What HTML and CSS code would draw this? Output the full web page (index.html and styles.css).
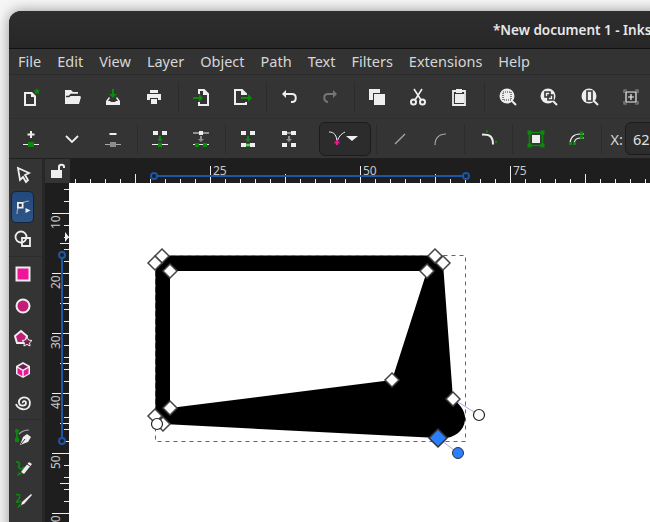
FILE: index.html
```html
<!DOCTYPE html>
<html>
<head>
    <meta charset="UTF-8">
    <title>New document 1 - Inkscape</title>
    <link rel="stylesheet" href="styles.css">
</head>
<body>
<div class="window">
    <div class="titlebar"><span class="title">*New document 1 - Inkscape</span></div>

    <ul class="menubar">
        <li>File</li><li>Edit</li><li>View</li><li>Layer</li><li>Object</li><li>Path</li><li>Text</li><li>Filters</li><li>Extensions</li><li>Help</li>
    </ul>

    <!-- commands -->
    <div class="toolbar first">
        <span class="btn"><svg viewBox="0 0 20 20"><path class="w2" d="M4 6h6l4 4v8H4z"/><path class="wf" d="M10 5h1l4 4v1h-5z"/><path class="gf" d="M16 1l1 2.300 2.400.2-1.800 1.500.6 2.400-2.200-1.300-2.200 1.300.6-2.400-1.800-1.500 2.400-.2z"/></svg></span>
        <span class="btn"><svg viewBox="0 0 20 20"><path class="wf" d="M3 3h6l2 2h5v2H9L7 9h11l1 1-2 7H3z"/><path class="d1" d="M4 9.500h3l2-2h8"/></svg></span>
        <span class="btn"><svg viewBox="0 0 20 20"><path class="gf" d="M9 2h2v5h3l-4 4-4-4h3z"/><path class="wf" d="M6 10l-3 4v4h14v-4l-3-4-1 1 2 3h-2l-1 1H8l-1-1H5l2-3z"/></svg></span>
        <span class="btn"><svg viewBox="0 0 20 20"><path class="wf ink" d="M6 3h8v3H6zM3 7h14v6h-3v-2H6v2H3zM7 12h6v5H7z"/></svg></span>
        <i class="sep"></i>
        <span class="btn"><svg viewBox="0 0 20 20"><path class="w2" d="M8 7V3h5l4 4v11H8v-3"/><path class="wf" d="M12 3h1l4 4v1h-5z"/><path class="gf" d="M2 10h6V7l4 4-4 4v-3H2z"/></svg></span>
        <span class="btn"><svg viewBox="0 0 20 20"><path class="w2" d="M14 8V7l-4-4H3v14h11v-2"/><path class="wf" d="M9 3h1l4 4v1H9z"/><path class="gf" d="M9 10h7V7l4 4-4 4v-3H9z"/></svg></span>
        <i class="sep"></i>
        <span class="btn"><svg viewBox="0 0 20 20"><path class="w2" d="M6 7h7c5 0 5 8 0 8h-1"/><path class="wf" d="M7 3v8L3 7z"/></svg></span>
        <span class="btn dim"><svg viewBox="0 0 20 20"><path class="w2" d="M14 7H8c-5 0-5 7 0 8"/><path class="wf" d="M13 3v8l4-4z"/></svg></span>
        <i class="sep"></i>
        <span class="btn"><svg viewBox="0 0 20 20"><path class="wf" d="M2 2h11v4H6v7H2z"/><path class="wf" d="M7 7h11v11H7z"/></svg></span>
        <span class="btn"><svg viewBox="0 0 20 20"><path class="w2 thin" d="M6 2l7 11M14 2L7 13"/><circle class="w2" cx="5.500" cy="15" r="2.500"/><circle class="w2" cx="14.500" cy="15" r="2.500"/></svg></span>
        <span class="btn"><svg viewBox="0 0 20 20"><path class="w2 mid" d="M7 4H4v14h12V4h-3"/><path class="wf" d="M7 2h6v4H7zM6 7h9v9H6z"/></svg></span>
        <i class="sep wide"></i>
        <span class="btn"><svg viewBox="0 0 20 20"><circle class="wf" cx="9" cy="9" r="7.500"/><path class="w2" d="M14 14l4 4"/><path class="dots" d="M5 5h8v8H5z"/></svg></span>
        <span class="btn"><svg viewBox="0 0 20 20"><circle class="wf" cx="9" cy="9" r="7.500"/><path class="w2" d="M14 14l4 4"/><path class="ds" d="M6 5h5v5H6z"/><path class="ds" d="M9 8h5v5H9z"/></svg></span>
        <span class="btn"><svg viewBox="0 0 20 20"><circle class="wf" cx="9" cy="9" r="7.500"/><path class="w2" d="M14 14l4 4"/><path class="ds" d="M7 4h5v10H7z"/></svg></span>
        <span class="btn"><svg viewBox="0 0 20 20"><path class="frame" d="M3 6V3h3M14 3h3v3M17 14v3h-3M6 17H3v-3"/><path class="w1" d="M5 5h10v10H5zM7 10h6M10 7v6"/></svg></span>
    </div>

    <!-- node tool controls -->
    <div class="toolbar second">
        <span class="btn"><svg viewBox="0 0 20 20"><path class="wf" d="M9 2h2v2.500h2.500v2H11V9H9V6.500H6.500v-2H9z"/><path class="w1" d="M2 15.500h16"/><path class="gf" d="M7 13h6v5H7z"/></svg></span>
        <span class="btn"><svg viewBox="0 0 20 20"><path class="w2 mid" d="M4 7l6 6 6-6"/></svg></span>
        <span class="btn"><svg viewBox="0 0 20 20"><path class="wf" d="M6.500 4h7v2h-7z"/><path class="w1 grey" d="M2 15.500h16"/><path class="grf" d="M7 13h6v5H7z"/></svg></span>
        <i class="sep"></i>
        <span class="btn"><svg viewBox="0 0 20 20"><path class="wf" d="M3 2h5v4H3zM12 2h5v4h-5z"/><path class="w1" d="M2 15.500h16"/><path class="gf" d="M9 7h2v3h2l-3 3-3-3h2zM8 14h4v4H8z"/></svg></span>
        <span class="btn"><svg viewBox="0 0 20 20"><path class="w1" d="M2 4h16M2 15.500h16"/><path class="wf" d="M8 2h4v4H8z"/><path class="grf" d="M9 7h2v3h2l-3 3-3-3h2z"/><path class="gf" d="M4 14h4v4H4zM12 14h4v4h-4z"/></svg></span>
        <i class="sep"></i>
        <span class="btn"><svg viewBox="0 0 20 20"><path class="wf" d="M3 2h5v4H3zM12 2h5v4h-5zM3 14h5v4H3zM12 14h5v4h-5z"/><path class="gf" d="M9 7h2v3h2l-3 3-3-3h2zM8 14h4v4H8z"/><path class="w1" d="M6 16h8"/></svg></span>
        <span class="btn"><svg viewBox="0 0 20 20"><path class="wf" d="M3 2h5v4H3zM12 2h5v4h-5zM3 14h5v4H3zM12 14h5v4h-5z"/><path class="w1" d="M8 4h4"/><path class="grf" d="M9 7h2v3h2l-3 3-3-3h2z"/></svg></span>
        <span class="combo"><svg class="combo-curve" viewBox="0 0 18 18"><path class="w1 thinner" d="M1 2c5 0 8 3 8 11M17 2c-4 2-7 5-8 11"/><path class="pf" d="M8 10h2v1.500h1.500v2H10V15H8v-1.500H6.500v-2H8z"/></svg><i class="caret"></i></span>
        <i class="sep after-combo"></i>
        <span class="btn"><svg viewBox="0 0 20 20"><path class="w1 grey" d="M5 15L15 5"/></svg></span>
        <span class="btn"><svg viewBox="0 0 20 20"><path class="w1 grey" d="M4 16c0-7 4-11 11-11"/></svg></span>
        <i class="sep"></i>
        <span class="btn"><svg viewBox="0 0 20 20"><path class="w2" d="M4 5.500c7 0 11 1 11 10"/><path class="gf" d="M8 1.500h2v2H8zM17 12h2v2h-2z"/></svg></span>
        <i class="sep wide"></i>
        <span class="btn"><svg viewBox="0 0 20 20"><path class="ds-g" d="M3.500 3.500h13v13h-13z"/><path class="wf" d="M6 6h8v8H6z"/><path class="gf" d="M1.500 1.500h4v4h-4zM14.500 1.500h4v4h-4zM1.500 14.500h4v4h-4zM14.500 14.500h4v4h-4z"/></svg></span>
        <span class="btn"><svg viewBox="0 0 20 20"><path class="w1" d="M3 16c0-8 4-11 10-11M7 16c0-5 2-7 6-7M13 5h4M13 9h4"/><path class="gf" d="M13 2.500h3v3h-3zM13 6.500h3v3h-3zM2 13h3v3H2zM6 13h3v3H6z"/></svg></span>
        <i class="sep"></i>
        <label class="coord">X:</label>
        <input class="spin" type="text" value="62.5" readonly>
    </div>

    <div class="workspace">
        <div class="toolbox">
            <span class="tool"><svg viewBox="0 0 20 20"><path class="w2 mid" d="M5 3l11 5-4 2 3 5-2 2-3-5-3 3z"/></svg></span>
            <span class="tool active"><svg viewBox="0 0 20 20"><path class="w1 grey" d="M4 17c0-6 3-12 12-13"/><path class="wf" d="M4 5h6.500v6.500H4z"/><path class="d1" d="M6.500 7.500h1.500V9H6.500z"/><path class="wf" d="M12.500 11l5 2.500-5 2.500z"/></svg></span>
            <span class="tool"><svg viewBox="0 0 20 20"><circle class="w2 mid" cx="8" cy="8" r="5.500"/><path class="w2 mid" d="M9 9h8v8H9z"/></svg></span>
            <i class="tool-sep"></i>
            <span class="tool"><svg viewBox="0 0 20 20"><path class="pink" d="M3.500 3.500h13v13h-13z"/></svg></span>
            <span class="tool"><svg viewBox="0 0 20 20"><circle class="crim" cx="10" cy="10" r="6.500"/></svg></span>
            <span class="tool"><svg viewBox="0 0 20 20"><path class="crim" d="M2 8l6-5 6 5-2 7H4z"/><path class="star" d="M14 9l1.500 3 3.500.5-2.500 2.300.6 3.200-3.100-1.600-3.100 1.600.6-3.200-2.500-2.300 3.500-.5z"/></svg></span>
            <span class="tool"><svg viewBox="0 0 20 20"><path class="wf" d="M10 2l7 4v8l-7 4-7-4V6z"/><path class="plum" d="M10 4l5 2.800-5 2.800-5-2.800z"/><path class="magenta" d="M4.500 8l4.800 2.700v5.500l-4.800-2.700zM15.500 8l-4.800 2.700v5.500l4.800-2.700z"/></svg></span>
            <span class="tool"><svg viewBox="0 0 20 20"><path class="w2 mid" d="M10 11c-1-2 3-3 3 0s-6 4-7 0 4-7 8-5 4 9-1 11c-4 1-9-1-10-5"/></svg></span>
            <i class="tool-sep"></i>
            <span class="tool"><svg viewBox="0 0 20 20"><path class="w1 grey" d="M6 7c3-3 6-4 10-4"/><path class="gl" d="M4 4v9"/><circle class="gf" cx="4" cy="4" r="2"/><path class="gf" d="M2 11h4v4H2z"/><path class="wf" d="M18 10l-4-3-4 3-3 8 8-3z"/><path class="d1 hair" d="M8 17l4-5"/></svg></span>
            <span class="tool"><svg viewBox="0 0 20 20"><path class="gl" d="M3 3c3-1 4 2 3 4s2 4 4 2 1 2-1 3"/><path class="gf" d="M4 17l2-4 3 2z"/><path class="wf" d="M16 3l3 2-8 10-3-2z"/><path class="d1 hair" d="M14 5l3 2"/></svg></span>
            <span class="tool"><svg viewBox="0 0 20 20"><path class="gl thin" d="M3 4c4-2 5 2 2 5s-1 3 3 1"/><path class="gf" d="M4 17l2-4 3 2z"/><path class="wf" d="M18 3l1 1-8 9-3 1 1-3z"/></svg></span>
        </div>

        <div class="stage">
            <div class="corner"><svg viewBox="0 0 16 16"><path class="wf" d="M1 7h11v8H1z"/><path class="w2" d="M9 7V4c0-3 5-3 5 0v1"/></svg></div>
            <svg class="ruler-top" viewBox="70 159 580 24">
                <path class="tick" stroke-dasharray="1 14" stroke-width="4" d="M75 181H650"/>
                <path class="tick" stroke-dasharray="1 149" stroke-width="9" d="M135 178.500H650"/>
                <path class="tick" stroke-dasharray="1 149" stroke-width="17" d="M210 174.500H650"/>
                <text class="rule-num" x="213" y="175">25</text>
                <text class="rule-num" x="363" y="175">50</text>
                <text class="rule-num" x="513" y="175">75</text>
                <path class="guide" d="M154 176H466"/>
                <circle class="guide-end" cx="154" cy="176" r="3"/>
                <circle class="guide-end" cx="466" cy="176" r="3"/>
            </svg>
            <svg class="ruler-left" viewBox="45 183 24 339">
                <path class="tick" stroke-dasharray="1 11" stroke-width="5" d="M66.500 177V522"/>
                <path class="tick" stroke-dasharray="1 59" stroke-width="9" d="M64.500 243V522"/>
                <path class="tick" stroke-dasharray="1 59" stroke-width="17" d="M60.500 213V522"/>
                <text class="rule-num" transform="translate(60 229) rotate(-90)">10</text>
                <text class="rule-num" transform="translate(60 289) rotate(-90)">20</text>
                <text class="rule-num" transform="translate(60 349) rotate(-90)">30</text>
                <text class="rule-num" transform="translate(60 409) rotate(-90)">40</text>
                <text class="rule-num" transform="translate(60 469) rotate(-90)">50</text>
                <text class="rule-num" transform="translate(60 529) rotate(-90)">60</text>
                <path class="guide" d="M62 255V441"/>
                <circle class="guide-end" cx="62" cy="255" r="3"/>
                <circle class="guide-end" cx="62" cy="441" r="3"/>
                <path class="pointer" d="M65 232l4 5-4 5z"/>
            </svg>
            <svg class="canvas" viewBox="69 183 581 339">
                <path class="shape" fill-rule="evenodd" d="M155 263L162 255.500H435L443 263L453 399C460 404 466 412 465 420C464 432 452 440 438 438L163 424L155 416ZM170 271V408L392 380L427 271Z"/>
                <path class="bbox" d="M155.500 255.500H465.500V441.500H155.500Z"/>
                <path class="outline" d="M155.500 263V416"/>
                <path class="handle-line" d="M453 399L479 415M438 438L458 453"/>
                <g class="node">
                    <path d="M162 249l7 7-7 7-7-7z"/>
                    <path d="M155 256l7 7-7 7-7-7z"/>
                    <path d="M435 249l7 7-7 7-7-7z"/>
                    <path d="M443 256l7 7-7 7-7-7z"/>
                    <path d="M170 264l7 7-7 7-7-7z"/>
                    <path d="M427 264l7 7-7 7-7-7z"/>
                    <path d="M392 373l7 7-7 7-7-7z"/>
                    <path d="M170 401l7 7-7 7-7-7z"/>
                    <path d="M453 392l7 7-7 7-7-7z"/>
                    <path d="M155 409l7 7-7 7-7-7z"/>
                    <path d="M163 417l7 7-7 7-7-7z"/>
                </g>
                <circle class="handle" cx="157" cy="424" r="5.500"/>
                <circle class="handle" cx="479" cy="415" r="5.500"/>
                <path class="node-on" d="M438 429l9 9-9 9-9-9z"/>
                <circle class="handle-on" cx="458" cy="453" r="5.500"/>
            </svg>
        </div>
    </div>
</div>
</body>
</html>
```

FILE: styles.css
```css
html, body {
    margin: 0;
    padding: 0;
    width: 100%;
    height: 100%;
    overflow: hidden;
}

body {
    background: #f6f6f6;
    font-family: "Noto Sans", "Open Sans", sans-serif;
}

ul, li {
    margin: 0;
    padding: 0;
    list-style: none;
}

.window {
    margin: 11px 0 0 9px;
    width: 660px;
    height: 530px;
    background: #343434;
    border-radius: 12px 12px 0 0;
    box-shadow: 0 0 14px rgba(0, 0, 0, .4);
    overflow: hidden;
}

.titlebar {
    height: 37px;
    border-bottom: 1px solid #111;
    background: linear-gradient(#2e2e2e, #272727);
    color: #e8e8e8;
    font-size: 13.500px;
    font-weight: 600;
    line-height: 38px;
    white-space: nowrap;
}

.title {
    margin-left: 484px;
}

.menubar {
    display: flex;
    height: 25px;
    padding-left: 1px;
    border-bottom: 1px solid #2b2b2b;
    background: #333;
    color: #d6d6d6;
    font-size: 14.500px;
    line-height: 25px;
}

.menubar li {
    padding: 0 8px;
}

.toolbar {
    display: flex;
    align-items: center;
    padding-left: 1.500px;
    white-space: nowrap;
}

.first {
    height: 43px;
    border-bottom: 1px solid #2f2f2f;
}

.second {
    height: 39px;
    border-bottom: 1px solid #202020;
}

.btn {
    display: flex;
    flex: none;
    justify-content: center;
    align-items: center;
    width: 41px;
}

.btn svg {
    width: 20px;
    height: 20px;
}

.dim {
    opacity: .35;
}

.sep {
    flex: none;
    width: 1px;
    height: 30px;
    margin: 0 2px 0 3px;
    background: #2c2c2c;
}

.wide {
    margin: 0 2.500px 0 4px;
}

.combo {
    display: flex;
    flex: none;
    align-items: center;
    box-sizing: border-box;
    width: 52px;
    height: 34px;
    margin-left: 9.500px;
    padding-left: 8px;
    border: 1px solid #1c1c1c;
    border-radius: 6px;
    background: #2c2c2c;
}

.combo-curve {
    width: 18px;
    height: 18px;
}

.caret {
    width: 0;
    height: 0;
    border: 6px solid transparent;
    border-top: 5px solid #eee;
    border-bottom: 0;
}

.after-combo {
    margin-left: 5px;
}

.coord {
    margin-left: 7px;
    color: #d6d6d6;
    font-size: 14.500px;
}

.spin {
    flex: none;
    box-sizing: border-box;
    width: 80px;
    height: 33px;
    margin-left: 2px;
    padding: 0 7px;
    border: 1px solid #1c1c1c;
    border-radius: 6px;
    outline: none;
    background: #2c2c2c;
    color: #e0e0e0;
    font-family: inherit;
    font-size: 14.500px;
}

.workspace {
    display: flex;
    height: 363px;
}

.toolbox {
    flex: none;
    width: 33px;
    border-right: 3px solid #272727;
}

.tool {
    display: flex;
    justify-content: center;
    align-items: center;
    box-sizing: border-box;
    width: 23px;
    height: 32px;
    margin-left: 2px;
}

.tool svg {
    flex: none;
    width: 20px;
    height: 20px;
}

.active {
    border: 1px solid #15243a;
    border-radius: 5px;
    background: linear-gradient(#23497c, #2d5587);
}

.tool-sep {
    display: block;
    height: 1px;
    margin: 1px 0;
    background: #2c2c2c;
}

.stage {
    display: grid;
    flex: 1;
    grid-template-columns: 25px 1fr;
    grid-template-rows: 24px 1fr;
    min-width: 0;
}

.corner {
    display: flex;
    justify-content: center;
    align-items: center;
    background: #343434;
}

.corner svg {
    width: 16px;
    height: 16px;
}

.ruler-top, .ruler-left {
    display: block;
    background: #1e1e1e;
}

.ruler-top {
    width: 580px;
    height: 24px;
}

.ruler-left {
    width: 24px;
    height: 339px;
    margin-right: 1px;
}

.canvas {
    display: block;
    width: 581px;
    height: 339px;
    margin-left: -1px;
    background: #fff;
}

/* svg paints */
svg path, svg circle {
    fill: none;
}

svg .wf { fill: #eee; }
svg .gf { fill: #0a8a0a; }
svg .grf { fill: #8c8c8c; }
svg .pf { fill: #f0149b; }
svg .w1 { stroke: #eee; stroke-width: 1.2; }
svg .w1.thinner { stroke-width: 1; }
svg .w2 { stroke: #eee; stroke-width: 2; }
svg .w2.thin { stroke-width: 1.6; }
svg .w2.mid { stroke-width: 1.8; }
svg .w1.grey { stroke: #a8a8a8; }
svg .d1 { stroke: #343434; stroke-width: 1.4; }
svg .d1.hair { stroke-width: 1; }
svg .ink { fill-rule: evenodd; }
svg .dots { stroke: #343434; stroke-width: 1.2; stroke-dasharray: 1 1; }
svg .ds { stroke: #343434; stroke-width: 1.6; }
svg .ds-g { stroke: #0a8a0a; stroke-width: 1.6; }
svg .frame { stroke: #8c8c8c; stroke-width: 1.2; }
svg .gl { stroke: #0a8a0a; stroke-width: 1.8; }
svg .gl.thin { stroke-width: 1.4; }
svg .pink { fill: #f0149b; stroke: #eee; stroke-width: 2; }
svg .crim { fill: #c31d78; stroke: #eee; stroke-width: 2; }
svg .star { fill: #7a1d52; stroke: #eee; stroke-width: 1; }
svg .plum { fill: #6b2355; }
svg .magenta { fill: #f0149b; }

.tick {
    fill: none;
    stroke: #eee;
}

.rule-num {
    fill: #c9c9c9;
    font-size: 12px;
}

svg .guide {
    stroke: #1c56a5;
    stroke-width: 2;
}

svg .guide-end {
    fill: #1e1e1e;
    stroke: #1c56a5;
    stroke-width: 2;
}

svg .pointer {
    fill: #eee;
}

svg .shape {
    fill: #000;
}

svg .bbox {
    stroke: #5a5ac8;
    stroke-width: 1;
    stroke-dasharray: 4 4;
}

svg .outline {
    stroke: #2a2ab0;
    stroke-width: 1;
    stroke-dasharray: 4 4;
}

svg .handle-line {
    stroke: #a9a9e8;
    stroke-width: 1;
}

svg .node path {
    fill: #fff;
    stroke: #444;
    stroke-width: 1.5;
}

svg .handle {
    fill: #fff;
    stroke: #222;
    stroke-width: 1.2;
}

svg .node-on {
    fill: #2a7fff;
    stroke: #333;
    stroke-width: 1.5;
}

svg .handle-on {
    fill: #2a7fff;
    stroke: #333;
    stroke-width: 1;
}
```
